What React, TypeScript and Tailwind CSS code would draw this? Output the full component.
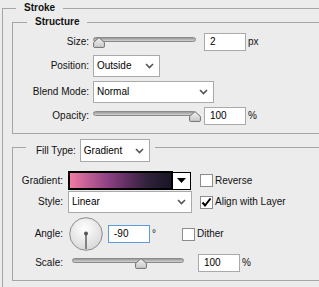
import React from "react";

function Thumb({ left }: { left: number }) {
  return (
    <svg
      width="12"
      height="11"
      viewBox="0 0 12 11"
      className="absolute top-[4px]"
      style={{ left }}
    >
      <defs>
        <linearGradient id="thumbFill" x1="0" y1="0" x2="0" y2="1">
          <stop offset="0" stopColor="#f2f2f2" />
          <stop offset="1" stopColor="#c9c9c9" />
        </linearGradient>
      </defs>
      <path
        d="M6 0.6 L11.4 5.4 L11.4 9.6 Q11.4 10.4 10.6 10.4 L1.4 10.4 Q0.6 10.4 0.6 9.6 L0.6 5.4 Z"
        fill="url(#thumbFill)"
        stroke="#6f6f6f"
        strokeWidth="1"
        strokeLinejoin="round"
      />
    </svg>
  );
}

function Slider({ width, thumb }: { width: number; thumb: number }) {
  return (
    <div className="relative h-[18px] shrink-0" style={{ width }}>
      <div className="absolute left-0 right-0 top-[4px] h-[5px] rounded-full border border-[#8a8a8a] bg-gradient-to-b from-[#9a9a9a] to-[#d2d2d2]" />
      <Thumb left={thumb} />
    </div>
  );
}

function Chevron() {
  return (
    <svg width="9" height="6" viewBox="0 0 9 6">
      <polyline
        points="1,1 4.5,4.5 8,1"
        fill="none"
        stroke="#555"
        strokeWidth="1.6"
      />
    </svg>
  );
}

function Select({ value, w, h = "h-[22px]" }: { value: string; w: string; h?: string }) {
  return (
    <div
      className={`${w} ${h} shrink-0 flex items-center justify-between border border-[#a9a9a9] bg-white pl-[3px] pr-[5px] text-black`}
    >
      <span>{value}</span>
      <Chevron />
    </div>
  );
}

function NumberBox({ value, blue }: { value: string; blue?: boolean }) {
  return (
    <div
      className={`w-[42px] h-[18px] shrink-0 flex items-center bg-white pl-[5px] text-black border ${
        blue ? "border-[#5d9be0]" : "border-[#a9a9a9]"
      }`}
    >
      {value}
    </div>
  );
}

function Checkbox({ checked }: { checked?: boolean }) {
  return (
    <div className="w-[13px] h-[13px] shrink-0 border border-[#8c8c8c] bg-white flex items-center justify-center">
      {checked && (
        <svg width="11" height="11" viewBox="0 0 11 11">
          <polyline
            points="1.5,5.5 4,8.5 9.5,1.5"
            fill="none"
            stroke="#000"
            strokeWidth="2"
          />
        </svg>
      )}
    </div>
  );
}

function Dial() {
  return (
    <svg width="34" height="34" viewBox="0 0 34 34" className="shrink-0">
      <defs>
        <radialGradient id="dialFill" cx="0.45" cy="0.35" r="0.7">
          <stop offset="0" stopColor="#ffffff" />
          <stop offset="1" stopColor="#d6d6d6" />
        </radialGradient>
      </defs>
      <circle cx="17" cy="17" r="16.3" fill="url(#dialFill)" stroke="#8a8a8a" strokeWidth="1" />
      <line x1="17" y1="17" x2="17" y2="32" stroke="#6a6a6a" strokeWidth="1.6" />
      <circle cx="17" cy="16.5" r="2" fill="#555" />
    </svg>
  );
}

export default function App() {
  return (
    <div className="w-[319px] h-[287px] overflow-hidden bg-[#ececec] pt-[8px] pl-[2px] font-['Liberation_Sans',Arial,sans-serif] text-[10px] leading-[12px] text-[#111]">
      {/* Stroke */}
      <div className="relative w-[340px] h-[300px] border-l border-t border-[#a5a5a5] pt-[13px] pl-[9px]">
        <span className="absolute left-[13px] -top-[7px] bg-[#ececec] px-[8px] font-bold">
          Stroke
        </span>

        {/* Structure */}
        <div className="relative w-[330px] h-[112px] border border-[#a5a5a5] pt-[10px]">
          <span className="absolute left-[14px] -top-[7px] bg-[#ececec] px-[8px] font-bold">
            Structure
          </span>

          <div className="flex items-center h-[18px]">
            <span className="w-[76px] text-right">Size:</span>
            <div className="ml-[4px]">
              <Slider width={103} thumb={0} />
            </div>
            <div className="ml-[8px]">
              <NumberBox value="2" />
            </div>
            <span className="ml-[2px]">px</span>
          </div>

          <div className="flex items-center mt-[4px]">
            <span className="w-[76px] text-right">Position:</span>
            <div className="ml-[4px]">
              <Select value="Outside" w="w-[67px]" />
            </div>
          </div>

          <div className="flex items-center mt-[4px]">
            <span className="w-[76px] text-right">Blend Mode:</span>
            <div className="ml-[4px]">
              <Select value="Normal" w="w-[121px]" />
            </div>
          </div>

          <div className="flex items-center h-[18px] mt-[4px]">
            <span className="w-[76px] text-right">Opacity:</span>
            <div className="ml-[4px]">
              <Slider width={103} thumb={96} />
            </div>
            <div className="ml-[8px]">
              <NumberBox value="100" />
            </div>
            <span className="ml-[2px]">%</span>
          </div>
        </div>

        {/* Fill */}
        <div className="relative mt-[13px] w-[330px] h-[134px] border border-[#a5a5a5]">
          <div className="absolute left-[13px] -top-[9px] flex items-center bg-[#ececec] pl-[10px] pr-[5px]">
            <span>Fill Type:</span>
            <div className="ml-[4px]">
              <Select value="Gradient" w="w-[70px]" h="h-[23px]" />
            </div>
          </div>

          <div className="flex items-center h-[19px] mt-[23px]">
            <span className="w-[50px] text-right">Gradient:</span>
            <div className="ml-[5px] w-[105px] h-[19px] border-2 border-black bg-[linear-gradient(to_right,#f07ca4,#c05d95_18%,#8d4183_38%,#5c2d5e_58%,#2e2139_78%,#191526)]" />
            <div className="w-[18px] h-[18px] border border-black border-l-0 bg-white flex items-center justify-center">
              <svg width="9" height="5" viewBox="0 0 9 5">
                <polygon points="0,0 9,0 4.5,5" fill="#000" />
              </svg>
            </div>
            <div className="ml-[9px]">
              <Checkbox />
            </div>
            <span className="ml-[2px]">Reverse</span>
          </div>

          <div className="flex items-center mt-[1px]">
            <span className="w-[50px] text-right">Style:</span>
            <div className="ml-[5px]">
              <Select value="Linear" w="w-[124px]" />
            </div>
            <div className="ml-[8px]">
              <Checkbox checked />
            </div>
            <span className="ml-[2px]">Align with Layer</span>
          </div>

          <div className="flex items-center mt-[4px]">
            <span className="w-[50px] text-right">Angle:</span>
            <div className="ml-[6px]">
              <Dial />
            </div>
            <div className="ml-[5px]">
              <NumberBox value="-90" blue />
            </div>
            <span className="ml-[2px] w-[30px]">°</span>
            <Checkbox />
            <span className="ml-[2px]">Dither</span>
          </div>

          <div className="flex items-center h-[18px] mt-[3px]">
            <span className="w-[50px] text-right">Scale:</span>
            <div className="ml-[9px]">
              <Slider width={112} thumb={63} />
            </div>
            <div className="ml-[14px]">
              <NumberBox value="100" />
            </div>
            <span className="ml-[2px]">%</span>
          </div>
        </div>
      </div>
    </div>
  );
}
